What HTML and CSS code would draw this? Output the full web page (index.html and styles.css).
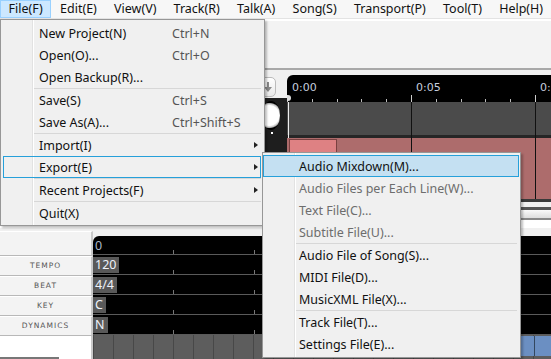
FILE: index.html
```html
<!DOCTYPE html>
<html lang="en">
<head>
    <meta charset="UTF-8">
    <title>Editor - Export</title>
    <link rel="stylesheet" href="styles.css">
</head>
<body>
    <div class="menubar">
        <span class="mb-item open">File(F)</span>
        <span class="mb-item">Edit(E)</span>
        <span class="mb-item">View(V)</span>
        <span class="mb-item">Track(R)</span>
        <span class="mb-item">Talk(A)</span>
        <span class="mb-item">Song(S)</span>
        <span class="mb-item">Transport(P)</span>
        <span class="mb-item">Tool(T)</span>
        <span class="mb-item">Help(H)</span>
    </div>

    <div class="toolbar"></div>

    <div class="tracks">
        <div class="track-head">
            <div class="head-top">
                <div class="mini-btn">
                    <svg width="8" height="10" viewBox="0 0 8 10"><path d="M3 0h2v5h3L4 10 0 5h3z" fill="#888"/></svg>
                </div>
            </div>
            <div class="head-body">
                <div class="knob"><span class="knob-dot"></span></div>
            </div>
        </div>
        <div class="timeline">
            <div class="ruler">
                <span class="time" style="left: 5px">0:00</span>
                <span class="time" style="left: 129px">0:05</span>
                <span class="time" style="left: 253px">0:10</span>
                <span class="major" style="left: 124px"></span>
                <span class="major" style="left: 248px"></span>
                <span class="playhead-dot"></span>
            </div>
            <div class="lanes">
                <div class="lane lane-dark"></div>
                <div class="lane lane-red"><div class="clip"></div></div>
                <span class="barline" style="left: 124px"></span>
                <span class="barline" style="left: 248px"></span>
                <span class="playhead"></span>
            </div>
            <div class="hscroll">
                <div class="hs-track"></div>
                <div class="hs-thumb"></div>
            </div>
        </div>
    </div>

    <div class="master">
        <div class="labels">
            <div class="lbl blank"></div>
            <div class="lbl">TEMPO</div>
            <div class="lbl">BEAT</div>
            <div class="lbl">KEY</div>
            <div class="lbl">DYNAMICS</div>
            <div class="lbl-fill"><div class="small-box"></div></div>
        </div>
        <div class="grid">
            <div class="row"><span class="val plain">0</span></div>
            <div class="row"><span class="val">120</span></div>
            <div class="row"><span class="val">4/4</span></div>
            <div class="row"><span class="val">C</span></div>
            <div class="row"><span class="val">N</span></div>
            <div class="notes"><div class="note-block"></div></div>
        </div>
    </div>

    <div class="menu file-menu">
        <div class="mi"><span class="label">New Project(N)</span><span class="key">Ctrl+N</span></div>
        <div class="mi"><span class="label">Open(O)...</span><span class="key">Ctrl+O</span></div>
        <div class="mi"><span class="label">Open Backup(R)...</span></div>
        <div class="sep"></div>
        <div class="mi"><span class="label">Save(S)</span><span class="key">Ctrl+S</span></div>
        <div class="mi"><span class="label">Save As(A)...</span><span class="key">Ctrl+Shift+S</span></div>
        <div class="sep"></div>
        <div class="mi sub"><span class="label">Import(I)</span></div>
        <div class="mi sub opened"><span class="label">Export(E)</span></div>
        <div class="sep"></div>
        <div class="mi sub"><span class="label">Recent Projects(F)</span></div>
        <div class="sep"></div>
        <div class="mi"><span class="label">Quit(X)</span></div>
    </div>

    <div class="menu sub-menu">
        <div class="mi hover"><span class="label">Audio Mixdown(M)...</span></div>
        <div class="mi disabled"><span class="label">Audio Files per Each Line(W)...</span></div>
        <div class="mi disabled"><span class="label">Text File(C)...</span></div>
        <div class="mi disabled"><span class="label">Subtitle File(U)...</span></div>
        <div class="sep"></div>
        <div class="mi"><span class="label">Audio File of Song(S)...</span></div>
        <div class="mi"><span class="label">MIDI File(D)...</span></div>
        <div class="mi"><span class="label">MusicXML File(X)...</span></div>
        <div class="sep"></div>
        <div class="mi"><span class="label">Track File(T)...</span></div>
        <div class="mi"><span class="label">Settings File(E)...</span></div>
    </div>
</body>
</html>
```

FILE: styles.css
```css
* { margin: 0; padding: 0; box-sizing: border-box; }
body {
    width: 551px;
    height: 359px;
    overflow: hidden;
    position: relative;
    background-color: #f0f0f0;
    font-family: "Noto Sans", "Liberation Sans", sans-serif;
    font-size: 12.5px;
    color: #111;
}

/* menu bar */
.menubar {
    display: flex;
    height: 19px;
    background-color: #f7f7f7;
    border-bottom: 1px solid #e3e3e3;
}
.mb-item {
    padding: 0 7.6px;
    line-height: 16px;
    height: 18px;
    border: 1px solid transparent;
    white-space: nowrap;
}
.mb-item.open {
    background-color: #cce8ff;
    border-color: #99d1ff;
}

.toolbar {
    height: 51px;
    background-color: #f3f3f3;
    border-top: 2px solid #fff;
    border-bottom: 2px solid #a8a8a8;
}

/* tracks */
.tracks {
    display: flex;
    height: 156px;
}
.track-head {
    width: 287px;
    display: flex;
    flex-direction: column;
}
.head-top {
    height: 28px;
    padding: 7px 11px 0 0;
    display: flex;
    justify-content: flex-end;
}
.mini-btn {
    width: 16px;
    height: 20px;
    border: 1px solid #bbb;
    border-radius: 0 5px 5px 0;
    background: linear-gradient(#fff, #e8e8e8);
    display: flex;
    align-items: center;
    justify-content: center;
}
.head-body {
    flex: 1;
    background-color: #1e1e1e;
    margin-left: 240px;
    padding: 3px 0 0 22px;
}
.knob {
    width: 18px;
    height: 29px;
    background: radial-gradient(circle at 40% 50%, #fff 55%, #bbb 66%, #000 72%);
    border-radius: 50%;
    position: relative;
}
.knob-dot {
    position: absolute;
    left: 9px;
    top: 31px;
    width: 2px;
    height: 2px;
    background-color: #fff;
}

.timeline {
    flex: 1;
    display: flex;
    flex-direction: column;
    padding-top: 5px;
}
.ruler {
    height: 27px;
    background-color: #000;
    border-top-left-radius: 6px;
    position: relative;
    overflow: hidden;
    background-image: repeating-linear-gradient(90deg, #bbb 0 1px, transparent 1px 24.8px);
    background-size: 100% 3px;
    background-position: 0 100%;
    background-repeat: no-repeat;
}
.time {
    position: absolute;
    top: 6px;
    font-family: "DejaVu Sans", sans-serif;
    font-size: 11px;
    color: #c6cede;
    white-space: nowrap;
}
.major {
    position: absolute;
    bottom: 0;
    width: 1px;
    height: 7px;
    background-color: #ccc;
}
.playhead-dot {
    position: absolute;
    left: -2px;
    bottom: 1px;
    width: 6px;
    height: 6px;
    border-radius: 50%;
    background-color: #ddd;
}
.lanes {
    position: relative;
    display: flex;
    flex-direction: column;
}
.lane-dark {
    height: 36px;
    background-color: #4b4b4b;
    border-bottom: 3px solid #262626;
}
.lane-red {
    height: 64px;
    background-color: #ad6c6c;
    border-bottom: 3px solid #3a3a3a;
    padding: 1px 0 0 2px;
}
.clip {
    width: 48px;
    height: 40px;
    background-color: #de8183;
    border: 1px solid #7a4040;
}
.barline {
    position: absolute;
    top: 0;
    bottom: 3px;
    width: 1px;
    background-color: #111;
}
.playhead {
    position: absolute;
    left: 1px;
    top: 0;
    height: 36px;
    width: 1px;
    background-color: #eee;
}
.hscroll {
    flex: 1;
    background-color: #fff;
    display: flex;
    flex-direction: column;
}
.hs-track {
    height: 8px;
    background: linear-gradient(#f0f0f0 0 5px, #555 5px 8px);
}
.hs-thumb {
    height: 10px;
    background: linear-gradient(#fafafa, #ddd);
    border-bottom: 2px solid #888;
}

/* master track */
.master {
    display: flex;
    height: 133px;
    border-top: 2px solid #fff;
}
.labels {
    width: 93px;
    display: flex;
    flex-direction: column;
    padding-top: 3px;
}
.lbl {
    height: 20px;
    background-color: #f3f3f3;
    border-top: 1px solid #fff;
    border-bottom: 1px solid #b8b8b8;
    border-right: 2px solid #c8c8c8;
    font-family: "DejaVu Sans", sans-serif;
    font-size: 7.5px;
    letter-spacing: 1px;
    color: #555;
    text-align: center;
    line-height: 18px;
}
.lbl.blank {
    height: 25px;
}
.lbl-fill {
    flex: 1;
    background-color: #fff;
    border-right: 2px solid #c8c8c8;
    position: relative;
}
.small-box {
    position: absolute;
    left: 0;
    bottom: -6px;
    width: 59px;
    height: 8px;
    border: 2px solid #777;
    background-color: #eee;
}
.grid {
    flex: 1;
    margin-top: 8px;
    background-color: #000;
    border-top-left-radius: 6px;
    display: flex;
    flex-direction: column;
}
.row {
    height: 20px;
    border-bottom: 1px solid #5a5a5a;
    background-image: repeating-linear-gradient(90deg, transparent 0 80px, #777 80px 81px);
    background-size: 100% 4px;
    background-position: 0 100%;
    background-repeat: no-repeat;
    padding-top: 1px;
}
.row:first-child {
    height: 19px;
}
.val {
    display: inline-block;
    height: 16px;
    padding: 0 3px 0 2px;
    background-color: #595959;
    color: #eef2fa;
    font-size: 12.5px;
    line-height: 16px;
}
.val.plain {
    background: none;
    color: #a9b6c8;
}
.notes {
    flex: 1;
    background-color: #5d5d5d;
    background-image: repeating-linear-gradient(90deg, #484848 0 1px, transparent 1px 20px);
    position: relative;
}
.note-block {
    position: absolute;
    left: 420px;
    right: 0;
    top: 1px;
    bottom: 3px;
    background-color: #6b8fc2;
    border-left: 1px solid #333;
    background-image: linear-gradient(90deg, transparent 0 20px, #33475f 20px 21px, transparent 21px);
}

/* drop-down menus */
.menu {
    position: absolute;
    background-color: #f0f0f0;
    border: 1px solid #979797;
    box-shadow: 2px 2px 2px rgba(0, 0, 0, 0.25);
    padding: 2px 0;
    background-image: linear-gradient(90deg, transparent 31px, #e2e2e2 31px 32px, #fff 32px 33px, transparent 33px);
}
.file-menu {
    left: 0;
    top: 19px;
    width: 265px;
    height: 207px;
}
.sub-menu {
    left: 262px;
    top: 152px;
    width: 259px;
    height: 206px;
}
.mi {
    display: flex;
    align-items: center;
    height: 22px;
    margin: 0 3px 0 2px;
    padding-left: 35px;
    border: 1px solid transparent;
    position: relative;
    white-space: nowrap;
}
.mi .label {
    width: 133px;
}
.mi .key {
    color: #555;
}
.mi.sub::after {
    content: '';
    position: absolute;
    right: 2px;
    top: 7px;
    border-left: 4px solid #222;
    border-top: 3.5px solid transparent;
    border-bottom: 3.5px solid transparent;
}
.mi.opened {
    border-color: #26a0da;
}
.mi.hover {
    border-color: #26a0da;
    background-color: #c4e0f2;
}
.mi.disabled {
    color: #6d6d6d;
}
.sub-menu .mi {
    margin: 0 1px 0 0;
}
.sub-menu .mi .label {
    width: auto;
}
.sep {
    height: 1px;
    margin-left: 33px;
    margin-right: 3px;
    background-color: #d7d7d7;
}
```
